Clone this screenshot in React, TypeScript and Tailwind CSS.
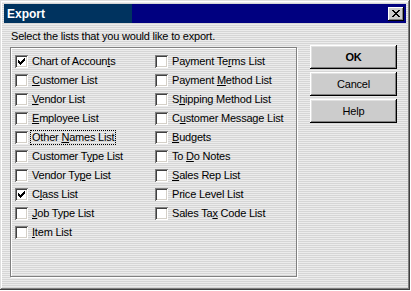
import type { ReactNode } from "react";

type Item = { label: ReactNode; checked?: boolean; focus?: boolean };

const u = (s: string) => <span className="underline underline-offset-[1px]">{s}</span>;

const col1: Item[] = [
  { label: <>Chart of Accoun{u("t")}s</>, checked: true },
  { label: <>{u("C")}ustomer List</> },
  { label: <>{u("V")}endor List</> },
  { label: <>{u("E")}mployee List</> },
  { label: <>Other {u("N")}ames List</>, focus: true },
  { label: <>Customer T{u("y")}pe List</> },
  { label: <>Vendor Ty{u("p")}e List</> },
  { label: <>C{u("l")}ass List</>, checked: true },
  { label: <>{u("J")}ob Type List</> },
  { label: <>{u("I")}tem List</> },
];

const col2: Item[] = [
  { label: <>Payment Te{u("r")}ms List</> },
  { label: <>Payment {u("M")}ethod List</> },
  { label: <>S{u("h")}ipping Method List</> },
  { label: <>C{u("u")}stomer Message List</> },
  { label: <>{u("B")}udgets</> },
  { label: <>To {u("D")}o Notes</> },
  { label: <>{u("S")}ales Rep List</> },
  { label: <>Price Level List</> },
  { label: <>Sales Ta{u("x")} Code List</> },
];

function Check({ item }: { item: Item }) {
  return (
    <div className="flex items-center h-[19px]">
      <div className="w-[13px] h-[13px] bg-white shrink-0 flex items-center justify-center shadow-[inset_1px_1px_#808080,inset_-1px_-1px_#ffffff,inset_2px_2px_#404040,inset_-2px_-2px_#d4d0c8]">
        {item.checked && (
          <svg width="7" height="7" viewBox="0 0 7 7">
            <path d="M0 2h1v1h1v1h1V3h1V2h1V1h1V0h1v3H6v1H5v1H4v1H3v1H2V6H1V5H0z" fill="#000" />
          </svg>
        )}
      </div>
      <span
        className={`ml-[3px] px-[1px] leading-[13px] whitespace-nowrap ${
          item.focus ? "outline outline-1 outline-dotted outline-black" : ""
        }`}
      >
        {item.label}
      </span>
    </div>
  );
}

function Btn({ children, bold }: { children: ReactNode; bold?: boolean }) {
  return (
    <button
      className={`w-[87px] h-[24px] bg-[#cccccc] text-black text-[11px] shadow-[inset_-1px_-1px_#000000,inset_1px_1px_#ffffff,inset_-2px_-2px_#808080,inset_2px_2px_#e0e0e0] ${
        bold ? "font-bold" : ""
      }`}
    >
      {children}
    </button>
  );
}

export default function App() {
  return (
    <div className="w-[411px] h-[291px] bg-white font-['Liberation_Sans',Arial,sans-serif] text-[11px] tracking-[-0.2px] text-black">
      <div className="w-[410px] h-[290px] p-[4px] flex flex-col bg-[repeating-linear-gradient(to_bottom,#ececec_0px,#ececec_1px,#d6d6d6_1px,#d6d6d6_2px)] shadow-[inset_-1px_-1px_#404040,inset_1px_1px_#dfdfdf,inset_-2px_-2px_#808080,inset_2px_2px_#ffffff]">
        {/* Title bar */}
        <div className="h-[19px] shrink-0 flex items-center justify-between pl-[3px] pr-[2px] bg-[linear-gradient(to_right,#00335f_0px,#00335f_128px,#000080_128px)]">
          <span className="text-white font-bold text-[12px] leading-none tracking-normal">Export</span>
          <div className="w-[16px] h-[14px] bg-[#cccccc] flex items-center justify-center shadow-[inset_-1px_-1px_#000000,inset_1px_1px_#ffffff,inset_-2px_-2px_#808080]">
            <svg width="8" height="7" viewBox="0 0 8 7">
              <path d="M0 0h2v1h1v1h2V1h1V0h2v1H7v1H6v1H5v1h1v1h1v1h1v1H6V6H5V5H3v1H2v1H0V6h1V5h1V4h1V3H2V2H1V1H0z" fill="#000" />
            </svg>
          </div>
        </div>

        {/* Body */}
        <div className="flex pl-[6px]">
          <div className="flex flex-col">
            <div className="mt-[7px] pl-[1px] leading-[13px]">Select the lists that you would like to export.</div>
            <div className="mt-[4px] w-[287px] h-[230px] border border-[#808080] shadow-[inset_1px_1px_#ffffff,1px_1px_#ffffff] pl-[4px] pt-[4px] grid grid-cols-[140px_1fr] content-start">
              <div className="flex flex-col">
                {col1.map((it, i) => (
                  <Check key={i} item={it} />
                ))}
              </div>
              <div className="flex flex-col">
                {col2.map((it, i) => (
                  <Check key={i} item={it} />
                ))}
              </div>
            </div>
          </div>
          <div className="ml-[13px] mt-[22px] flex flex-col gap-[3px]">
            <Btn bold>OK</Btn>
            <Btn>Cancel</Btn>
            <Btn>Help</Btn>
          </div>
        </div>
      </div>
    </div>
  );
}
